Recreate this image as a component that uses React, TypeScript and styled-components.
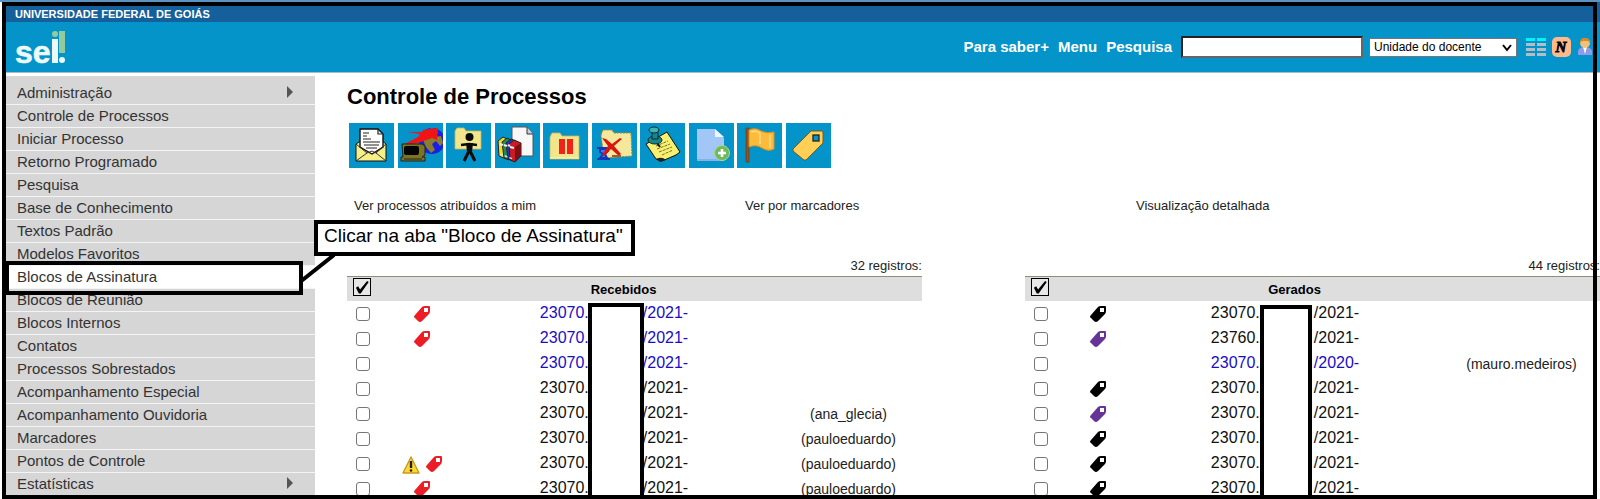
import React from "react";
import styled, { createGlobalStyle, css } from "styled-components";

const GlobalStyle = createGlobalStyle`
  * { box-sizing: border-box; }
  body {
    margin: 0;
    background: #fff;
    color: #222;
    font-family: "Liberation Sans", Arial, sans-serif;
  }
  a { color: inherit; text-decoration: none; }
`;

const Page = styled.div`
  position: relative;
  height: 100vh;
  overflow: hidden;
  border-top: 2px solid #5b93c2;
`;

const Frame = styled.div`
  position: absolute;
  inset: 0 3px 0 2px;
  border: 4px solid #000;
  pointer-events: none;
  z-index: 5;
`;

const Institution = styled.div`
  margin-left: 2px;
  padding: 4px 13px 0;
  height: 20px;
  line-height: 16px;
  background: #155f9b;
  color: #fff;
  font-size: 11px;
  font-weight: bold;
`;

const Header = styled.header`
  display: flex;
  justify-content: space-between;
  align-items: center;
  margin-left: 2px;
  height: 51px;
  padding: 0 7px 0 13px;
  background: #0494c9;
  border-bottom: 1px solid #a9bac6;
`;

const Tools = styled.div`
  display: flex;
  align-items: center;
  gap: 9px;
`;

const TopLink = styled.a`
  color: #fff;
  font-size: 15px;
  font-weight: bold;
  line-height: 20px;
`;

const SearchGroup = styled.div`
  display: flex;
  align-items: center;
  gap: 6px;
`;

const SearchInput = styled.input`
  width: 182px;
  height: 22px;
  padding: 0 4px;
  background: #fff;
  border: 2px solid;
  border-color: #222 #666 #666 #222;
  border-radius: 0;
  font-size: 12px;
`;

const SelectBox = styled.div`
  position: relative;
  display: flex;
  svg {
    position: absolute;
    right: 5px;
    top: 6px;
    pointer-events: none;
  }
`;

const UnitSelect = styled.select`
  appearance: none;
  width: 148px;
  height: 19px;
  padding: 0 4px;
  background: #fff;
  border: 1px solid #767676;
  border-radius: 0;
  color: #000;
  font-family: inherit;
  font-size: 12px;
`;

const IconRow = styled.div`
  display: flex;
  align-items: center;
  gap: 6px;
`;

const IconButton = styled.button`
  display: flex;
  padding: 0;
  border: 0;
  background: none;
`;

const Body = styled.div`
  display: flex;
  align-items: flex-start;
`;

const Sidebar = styled.nav`
  flex: 0 0 309px;
  margin: 3px 0 0 6px;
`;

const MenuList = styled.ul`
  margin: 0;
  padding: 6px 0 0;
  list-style: none;
  background: #d6d6d6;
`;

const MenuItem = styled.li<{ $active?: boolean }>`
  position: relative;
  height: 23px;
  border-bottom: 1px solid #f4f4f4;
  background: ${(p) => (p.$active ? "#fff" : "#d6d6d6")};
  ${(p) =>
    p.$active &&
    css`
      &::after {
        content: "";
        position: absolute;
        inset: -5px 12px -7px -1px;
        border: 4px solid #000;
        z-index: 2;
        pointer-events: none;
      }
    `}
`;

const MenuLink = styled.a`
  display: flex;
  align-items: center;
  justify-content: space-between;
  height: 22px;
  padding: 0 22px 2px 11px;
  font-size: 15px;
  color: #333;
`;

const Main = styled.main`
  flex: 1;
  min-width: 0;
  padding: 11px 0 0 32px;
`;

const Title = styled.h1`
  margin: 0;
  color: #000;
  font-size: 22px;
  line-height: 26px;
`;

const Toolbar = styled.div`
  display: flex;
  justify-content: space-between;
  width: 482px;
  margin: 13px 0 28px 2px;
`;

const ToolButton = styled.button`
  display: flex;
  width: 45px;
  height: 45px;
  padding: 0;
  border: 0;
  background: #0494c9;
`;

const Views = styled.div`
  display: grid;
  grid-template-columns: repeat(3, 1fr);
  padding: 0 73px 0 7px;
  margin-bottom: 40px;
  font-size: 13px;
  line-height: 20px;
`;

const Panels = styled.div`
  display: grid;
  grid-template-columns: 1fr 1fr;
  gap: 103px;
`;

const Panel = styled.section`
  position: relative;
`;

const DataTable = styled.table`
  width: 100%;
  table-layout: fixed;
  border-collapse: separate;
  border-spacing: 0;
  caption {
    text-align: right;
    font-size: 13px;
    line-height: 20px;
  }
  th, td { padding: 0; height: 25px; text-align: center; }
`;

const Col = styled.col<{ $w?: number }>`
  width: ${(p) => (p.$w ? `${p.$w}px` : "auto")};
`;

const HeadCell = styled.th<{ $shift?: number }>`
  border-top: 1px solid #8c8f78;
  background: #dedede;
  color: #000;
  font-size: 13px;
  && { padding-right: ${(p) => p.$shift ?? 0}px; }
`;

const CheckBox = styled.input`
  appearance: none;
  display: block;
  width: 14px;
  height: 14px;
  margin: 0 auto;
  border: 1px solid #767676;
  border-radius: 3px;
  background: #fff;
`;

const CheckAll = styled(CheckBox)`
  width: 18px;
  height: 18px;
  margin: 0 0 4px 6px;
  border-color: #000;
  border-radius: 0;
  background: #e8e8e8;
  &:checked::after {
    content: "";
    display: block;
    height: 16px;
    background: #000;
    clip-path: polygon(12% 54%, 26% 46%, 38% 66%, 82% 12%, 92% 18%, 42% 90%, 30% 90%);
  }
`;

const TagCell = styled.div`
  display: flex;
  justify-content: center;
  align-items: center;
  gap: 6px;
  padding-top: 2px;
`;

const Process = styled.a<{ $unread?: boolean }>`
  display: flex;
  justify-content: center;
  gap: 54px;
  padding-bottom: 2px;
  font-size: 16px;
  line-height: 20px;
  color: ${(p) => (p.$unread ? "#1a0dc8" : "#111")};
`;

const UserCell = styled.td`
  font-size: 14px;
  && { padding: 1px 0 0 12px; }
`;

const Cover = styled.div<{ $left: number; $top: number; $w: number }>`
  position: absolute;
  left: ${(p) => p.$left}px;
  top: ${(p) => p.$top}px;
  bottom: 0;
  width: ${(p) => p.$w}px;
  border: 4px solid #000;
  background: #fff;
`;

const Callout = styled.div`
  position: absolute;
  left: 314px;
  top: 218px;
  padding: 0 8px 4px 6px;
  border: 4px solid #000;
  background: #fff;
  color: #000;
  font-size: 19px;
  line-height: 24px;
  white-space: nowrap;
  z-index: 3;
`;

const Pointer = styled.svg`
  position: absolute;
  left: 299px;
  top: 250px;
  z-index: 3;
`;

const Logo = () => (
  <svg width="52" height="50" viewBox="0 -8 52 50" role="img" aria-label="sei!">
    <text x="0" y="33" fill="#eefafa" stroke="#eefafa" strokeWidth=".6" fontSize="32" fontWeight="bold" fontFamily='"Liberation Sans",sans-serif'>se</text>
    <rect x="37" y="9" width="6" height="24" fill="#eefafa" />
    <circle cx="40" cy="4" r="3" fill="#93cb9c" />
    <rect x="44" y="1" width="6" height="22" fill="#93cb9c" />
    <circle cx="47" cy="30" r="3" fill="#eefafa" />
  </svg>
);

const Arrow = () => (
  <svg width="6" height="12" viewBox="0 0 6 12" aria-hidden="true"><path d="M0 0L6 6L0 12Z" fill="#555" /></svg>
);

const Tag = ({ color }: { color: string }) => (
  <svg width="17" height="17" viewBox="0 0 17 17" aria-hidden="true">
    <path d="M1 9L8 1Q9 0 11 0H15Q16 0 16 1V5Q16 7 15 8L8 15Q6 17 4 15L1 12Q-1 11 1 9Z" fill={color} />
    <rect x="10" y="2" width="4" height="4" fill="#fff" />
  </svg>
);

const Warning = () => (
  <svg width="18" height="18" viewBox="0 0 18 18" aria-hidden="true">
    <path d="M9 1L17 17H1Z" fill="#fdd835" stroke="#c79a1c" strokeWidth="1.4" strokeLinejoin="round" />
    <path d="M9 5V12" stroke="#222" strokeWidth="2.4" /><circle cx="9" cy="14.5" r="1.3" fill="#222" />
  </svg>
);

const GridIcon = () => (
  <svg width="20" height="18" viewBox="0 0 20 18" aria-hidden="true">
    {[0, 5, 10, 15].map((y) => (
      <g key={y} fill={y === 0 ? "#00f4fa" : "#b4bcc4"}>
        <rect x="0" y={y} width="9" height="3" /><rect x="11" y={y} width="9" height="3" />
      </g>
    ))}
  </svg>
);

const NewsIcon = () => (
  <svg width="19" height="20" viewBox="0 0 19 20" aria-hidden="true">
    <rect width="19" height="20" rx="5" fill="#ffba8c" />
    <text x="9" y="15" textAnchor="middle" fontSize="15" fontWeight="bold" fontStyle="italic" stroke="#000" strokeWidth=".8" fontFamily='"Liberation Serif",serif'>N</text>
  </svg>
);

const PersonIcon = () => (
  <svg width="16" height="20" viewBox="0 0 16 20" aria-hidden="true">
    <path d="M1 18V14Q2 10 8 10Q14 10 15 14V18Z" fill="#8d9be8" />
    <path d="M6 10H10L8 17Z" fill="#fff" />
    <circle cx="8" cy="6" r="5" fill="#f3c078" /><path d="M3 6Q3 1 8 1Q13 1 13 6Q11 3 8 4Q5 3 3 6Z" fill="#d8891b" />
  </svg>
);

const folder = "#f3e58b";

const tools: { label: string; art: React.ReactNode }[] = [
  { label: "Enviar e-mail", art: <>
    <path d="M7 21L13 17H32L37 21V38H7Z" fill="#f5ef86" stroke="#111" />
    <path d="M11 24V6H29L34 11V24L23 31Z" fill="#fff" stroke="#111" strokeWidth="1.4" />
    <path d="M29 6V11H34M14 10H20M14 13H18M14 16H22M14 19H31M15 22H30M17 25H28" fill="none" stroke="#222" strokeWidth="1.2" />
    <path d="M7 21L18 30L7 38M37 21L27 30L37 38M18 30L23 28L27 30" fill="none" stroke="#333" />
  </> },
  { label: "Enviar processo", art: <>
    <circle cx="34" cy="18" r="13" fill="#1620e8" />
    <path d="M26 9L34 5L40 9L37 14L43 13L45 20L42 23L38 18L34 21L37 27L33 30L28 24L25 17Z" fill="#8b7d2c" />
    <path d="M9 9H26L24 7L40 5L39 17L34 15L20 20L3 23L20 14L22 11Z" fill="#f21414" />
    <path d="M4 21H24L27 23V32L24 34H27V38H3V34H5Z" fill="#7d7420" stroke="#222" />
    <rect x="6" y="23" width="15" height="9" rx="2" fill="#050505" /><path d="M6 36H24" stroke="#222" />
  </> },
  { label: "Atribuição de processos", art: <>
    <path d="M9 8L11 5H18L20 8H35V26H9Z" fill={folder} stroke="#c9b65a" strokeWidth=".8" />
    <circle cx="23.500" cy="14" r="4" fill="#0a0a0a" />
    <path d="M15 22L23 21L31 22" stroke="#0a0a0a" strokeWidth="2.600" fill="none" />
    <path d="M23.500 27L18 38M23.500 27L29 38" stroke="#0a0a0a" strokeWidth="3" fill="none" />
    <path d="M20 20H27L26 29H21Z" fill="#0a0a0a" />
  </> },
  { label: "Incluir documento", art: <>
    <path d="M17 4H32L38 11V33H17Z" fill="#f8f8f8" stroke="#555" /><path d="M32 4V11H38" fill="#ccd" stroke="#333" />
    <path d="M3 18L8 14L12 16L11 36L4 33Z" fill="#f1dc26" stroke="#222" />
    <path d="M7 19L12 15L16 17L14 37L9 35Z" fill="#1d8f49" stroke="#222" />
    <path d="M11 20L16 16L21 18L19 38L13 36Z" fill="#2433cf" stroke="#222" />
    <path d="M14 21L19 17L26 20V33L20 39L15 37Z" fill="#c81c24" stroke="#222" /><path d="M20 24L26 20V33L20 39Z" fill="#7c1016" />
    <path d="M5 21L8 22M9 22L12 23M13 22L15 23M15 24L19 25" stroke="#eee" strokeWidth="2" fill="none" />
    <path d="M5 31L18 36" stroke="#ddd" strokeWidth="1.500" strokeDasharray="3 2" />
  </> },
  { label: "Sobrestar processo", art: <>
    <path d="M7 14L9 10H17L19 13H36V36H7Z" fill={folder} stroke="#c9b65a" strokeWidth=".8" /><path d="M7 35H36" stroke="#fff6b8" />
    <path d="M16 16H22V31H16ZM24 16H30V31H24Z" fill="#f0231c" />
  </> },
  { label: "Concluir processo", art: <>
    <path d="M9 12L11 7H20L22 10H39L40 33L12 35Z" fill="#f3e89b" stroke="#a9892f" strokeDasharray="2 1" />
    <path d="M5 25H18M5 36H18M8 26V29L11 31L8 35H15L13 31L16 28V26Z" stroke="#1337bd" strokeWidth="2" fill="#3f78ef" />
    <path d="M10 15L14 16L20 21L28 15L30 16L22 23L29 31L27 33L19 26L12 33L10 32L16 23Z" fill="#d8150f" />
    <path d="M20 33H29" stroke="#b3512c" strokeWidth="2" />
  </> },
  { label: "Anotações", art: <>
    <path d="M6 21L27 9L40 29L36 32L22 38L16 36Z" fill="#f8f06f" stroke="#111" />
    <path d="M16 36Q22 33 26 37L20 39Z" fill="#222" />
    <path d="M16 23L28 18M17 26L30 21M19 29L32 24M22 32L33 27" stroke="#77702c" strokeDasharray="3 1" />
    <path d="M15 17L20 24" stroke="#111" strokeWidth="2" />
    <ellipse cx="15" cy="17" rx="7" ry="4" fill="#17858c" stroke="#062f34" /><path d="M12 8H18V16H12Z" fill="#17858c" stroke="#062f34" /><ellipse cx="14" cy="7" rx="5" ry="3" fill="#43b0b1" stroke="#062f34" />
  </> },
  { label: "Novo documento", art: <>
    <path d="M8 6H26L35 15V38H8Z" fill="#a2c6f5" /><path d="M8 37H34" stroke="#6f9ed8" /><path d="M26 6V14H35Z" fill="#eef5ff" />
    <circle cx="33" cy="30" r="7.500" fill="#6fba5b" stroke="#a9d69a" /><path d="M33 26V34M29 30H37" stroke="#fff" strokeWidth="2.600" />
  </> },
  { label: "Sinalizar", art: <>
    <rect x="9" y="5" width="3" height="34" fill="#8b5526" stroke="#57391c" strokeWidth=".6" />
    <path d="M12 7Q19 4 24 8Q30 11 37 9V26Q31 29 25 25Q19 21 12 24Z" fill="#fdbb3c" stroke="#e08f1d" />
    <path d="M14 9Q19 7 23 10V21M33 12V25" fill="none" stroke="#ffdc85" strokeWidth="1.500" />
  </> },
  { label: "Marcadores", art: <>
    <path d="M7 26L25 8H36Q37 8 37 10V20L20 37H18L7 28Z" fill="#ffcf57" stroke="#775a1b" />
    <rect x="27" y="12" width="6" height="6" fill="#0494c9" stroke="#222" strokeWidth="1.300" />
  </> },
];

const menu = [
  "Administração", "Controle de Processos", "Iniciar Processo", "Retorno Programado", "Pesquisa",
  "Base de Conhecimento", "Textos Padrão", "Modelos Favoritos", "Blocos de Assinatura",
  "Blocos de Reunião", "Blocos Internos", "Contatos", "Processos Sobrestados",
  "Acompanhamento Especial", "Acompanhamento Ouvidoria", "Marcadores", "Pontos de Controle", "Estatísticas",
];
const withSubmenu = ["Administração", "Estatísticas"];

type Row = { tag?: string; warn?: boolean; start?: string; end?: string; unread?: boolean; user?: string };

const red = "#ee1c24";
const purple = "#663399";
const black = "#000";

const received: Row[] = [
  { tag: red, unread: true },
  { tag: red, unread: true },
  { unread: true },
  {},
  { user: "(ana_glecia)" },
  { user: "(pauloeduardo)" },
  { tag: red, warn: true, user: "(pauloeduardo)" },
  { tag: red, user: "(pauloeduardo)" },
];

const generated: Row[] = [
  { tag: black },
  { tag: purple, start: "23760." },
  { end: "/2020-", unread: true, user: "(mauro.medeiros)" },
  { tag: black },
  { tag: purple },
  { tag: black },
  { tag: black },
  { tag: black },
];

type ProcessTableProps = {
  title: string;
  count: string;
  rows: Row[];
  tagWidth: number;
  numberWidth: number;
  shift: number;
  cover: [number, number, number];
};

const ProcessTable = ({ title, count, rows, tagWidth, numberWidth, shift, cover }: ProcessTableProps) => (
  <Panel>
    <DataTable>
      <caption>{count}</caption>
      <colgroup><Col $w={32} /><Col $w={tagWidth} /><Col $w={numberWidth} /><Col /></colgroup>
      <thead>
        <tr>
          <HeadCell><CheckAll type="checkbox" defaultChecked aria-label={`Selecionar todos: ${title}`} /></HeadCell>
          <HeadCell colSpan={3} $shift={shift}>{title}</HeadCell>
        </tr>
      </thead>
      <tbody>
        {rows.map((r, i) => (
          <tr key={i}>
            <td><CheckBox type="checkbox" aria-label={`${title}, processo ${i + 1}`} /></td>
            <td><TagCell>{r.warn && <Warning />}{r.tag && <Tag color={r.tag} />}</TagCell></td>
            <td><Process href="#" $unread={r.unread}><span>{r.start ?? "23070."}</span><span>{r.end ?? "/2021-"}</span></Process></td>
            <UserCell>{r.user}</UserCell>
          </tr>
        ))}
      </tbody>
    </DataTable>
    <Cover $left={cover[0]} $top={cover[1]} $w={cover[2]} />
  </Panel>
);

export default function App() {
  return (
    <Page>
      <GlobalStyle />
      <Institution>UNIVERSIDADE FEDERAL DE GOIÁS</Institution>
      <Header>
        <Logo />
        <Tools>
          <TopLink href="#">Para saber+</TopLink>
          <TopLink href="#">Menu</TopLink>
          <TopLink as="label" htmlFor="search">Pesquisa</TopLink>
          <SearchGroup>
            <SearchInput id="search" type="text" />
            <SelectBox>
              <UnitSelect aria-label="Unidade" defaultValue="docente"><option value="docente">Unidade do docente</option></UnitSelect>
              <svg width="10" height="8" viewBox="0 0 10 8" aria-hidden="true"><path d="M1 1L5 6L9 1" fill="none" stroke="#000" strokeWidth="2" /></svg>
            </SelectBox>
          </SearchGroup>
          <IconRow>
            <IconButton aria-label="Controle de processos"><GridIcon /></IconButton>
            <IconButton aria-label="Novidades"><NewsIcon /></IconButton>
            <IconButton aria-label="Usuário"><PersonIcon /></IconButton>
          </IconRow>
        </Tools>
      </Header>
      <Body>
        <Sidebar>
          <MenuList>
            {menu.map((m) => (
              <MenuItem key={m} $active={m === "Blocos de Assinatura"}>
                <MenuLink href="#">{m}{withSubmenu.includes(m) && <Arrow />}</MenuLink>
              </MenuItem>
            ))}
          </MenuList>
        </Sidebar>
        <Main>
          <Title>Controle de Processos</Title>
          <Toolbar>
            {tools.map((t) => (
              <ToolButton key={t.label} aria-label={t.label}>
                <svg width="45" height="45" viewBox="0 0 45 45" aria-hidden="true">{t.art}</svg>
              </ToolButton>
            ))}
          </Toolbar>
          <Views>
            <a href="#">Ver processos atribuídos a mim</a>
            <a href="#">Ver por marcadores</a>
            <a href="#">Visualização detalhada</a>
          </Views>
          <Panels>
            <ProcessTable title="Recebidos" count="32 registros:" rows={received} tagWidth={86} numberWidth={298} shift={54} cover={[241, 47, 56]} />
            <ProcessTable title="Gerados" count="44 registros:" rows={generated} tagWidth={82} numberWidth={292} shift={68} cover={[235, 49, 52]} />
          </Panels>
        </Main>
      </Body>
      <Callout>Clicar na aba "Bloco de Assinatura"</Callout>
      <Pointer width="40" height="34" viewBox="0 0 40 34" aria-hidden="true"><path d="M1 30L35 3" stroke="#000" strokeWidth="4" /></Pointer>
      <Frame />
    </Page>
  );
}
